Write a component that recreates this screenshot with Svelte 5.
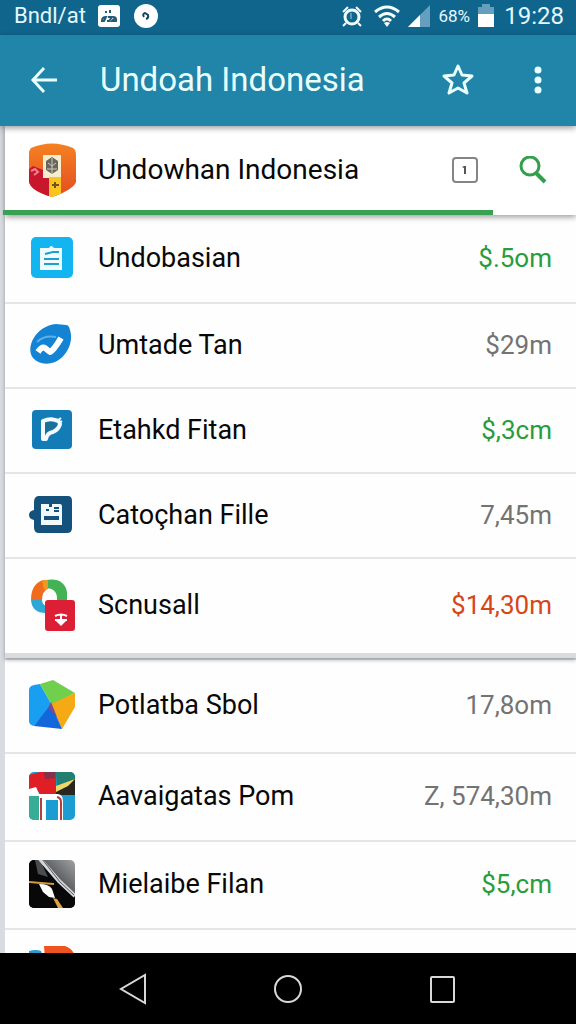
<script lang="ts">
  type Item = {
    name: string;
    amount: string;
    icon: string;
    tone?: 'up' | 'down';
    size?: 'tall' | 'short';
  };

  const recent: Item[] = [
    { name: 'Undobasian', amount: '$.5om', icon: 'clipboard', tone: 'up' },
    { name: 'Umtade Tan', amount: '$29m', icon: 'trend', size: 'short' },
    { name: 'Etahkd Fitan', amount: '$,3cm', icon: 'letter', tone: 'up', size: 'short' },
    { name: 'Catoçhan Fille', amount: '7,45m', icon: 'book', size: 'short' },
    { name: 'Scnusall', amount: '$14,30m', icon: 'ring', tone: 'down', size: 'tall' },
  ];

  const others: Item[] = [
    { name: 'Potlatba Sbol', amount: '17,8om', icon: 'gem', size: 'tall' },
    { name: 'Aavaigatas Pom', amount: 'Z, 574,30m', icon: 'mosaic' },
    { name: 'Mielaibe Filan', amount: '$5,cm', icon: 'photo', tone: 'up' },
    { name: '', amount: '', icon: 'tabs', size: 'short' },
  ];

  let query = $state('Undowhan Indonesia');
  let starred = $state(false);
</script>

{#snippet picture(icon: string)}
  <svg class="picture" viewBox="0 0 48 48" aria-hidden="true">
    {#if icon === 'clipboard'}
      <rect x="3" y="3" width="42" height="41" rx="5" fill="#12b5f0" />
      <path d="M12 14h9q2-4 5 0h8v22H12z" fill="#effbff" />
      <path d="M17 20l8-2h6M16 25h15M16 30h15" fill="none" stroke="#1f9fcb" stroke-width="2" />
    {:else if icon === 'trend'}
      <path d="M28 3l10 1q3 0 4 5c4 13-4 26-13 31-8 4-18 4-24-3C-3 26 8 5 28 3z" fill="#1483d4" />
      <path d="M9 21q7-7 19-5" fill="none" stroke="#56b3ec" stroke-width="2" />
      <path d="M10 31q4-6 7-4l5 4q4-2 11-14" fill="none" stroke="#fff" stroke-width="6" stroke-linejoin="round" />
    {:else if icon === 'letter'}
      <rect x="4" y="4" width="40" height="39" rx="4" fill="#137bb6" />
      <path d="M15 33V15q7-3 12-1 5 1 5 4-1 5-7 8-6 1-7 7z" fill="#1b6f9c" stroke="#f3fbff" stroke-width="4" stroke-linejoin="round" />
      <path d="M29 15l4-3M31 17l3-2" stroke="#f3fbff" stroke-width="2" />
    {:else if icon === 'book'}
      <path d="M10 5h30q4 0 4 5v27q0 5-5 5H11q-5 0-5-6v-7q-5-1-5-5t5-5v-8q0-5 4-6z" fill="#14527d" />
      <path d="M13 13h8v3h3v-3h8q2 0 2 3v18H13z" fill="#f1f8fc" />
      <path d="M18 19h3M26 17h5M26 20h5" stroke="#14527d" stroke-width="2" />
      <path d="M16 27h15" stroke="#14527d" stroke-width="4" />
    {:else if icon === 'ring'}
      <path d="M3 19Q3 3 15-1h5l1 8q-7 3-7 12z" fill="#f06b1b" />
      <path d="M18-1q18-3 21 12v9H29q1-12-10-13z" fill="#42b255" />
      <path d="M14-1l6 0 0 8-4 2z" fill="#ed9a24" />
      <path d="M3 19h11q0 4 4 6v7Q4 32 3 19z" fill="#2ea7d5" />
      <rect x="17" y="19" width="30" height="31" rx="3" fill="#dc1f34" />
      <path d="M27 35q6-3 12 0M33 33v10M27 39h12" fill="none" stroke="#fff" stroke-width="2" />
      <path d="M28 40h10l-5 5z" fill="#fff" />
    {:else if icon === 'gem'}
      <path d="M6 4l6-1 12 21L6 45q-5-1-5-5V9q0-4 5-5z" fill="#199ff2" />
      <path d="M12 3l13-4 22 13-23 12z" fill="#70cf4d" />
      <path d="M23 23l24-11v14L34 48z" fill="#f5a914" />
      <path d="M23 23l11 25-28-3z" fill="#1267db" />
      <path d="M23 21l6 15-9-9z" fill="#7a4b94" />
    {:else if icon === 'mosaic'}
      <clipPath id="mosaic-clip"><rect x="1" y="0" width="46" height="48" rx="5" /></clipPath>
      <g clip-path="url(#mosaic-clip)">
        <path d="M1 0h46v48H1z" fill="#1c9dd1" />
        <path d="M1 24h10v24H1z" fill="#37ad98" />
        <path d="M1 3L12 0h16v22H12l-4-6-7 2z" fill="#df1e25" />
        <path d="M1 17l7-2 4 9H1z" fill="#fff" />
        <path d="M16 0h11v6l-10 1z" fill="#84314f" />
        <path d="M28 0h19v10l-18 4z" fill="#217e70" />
        <path d="M28 15L47 7v16H28z" fill="#29251f" />
        <path d="M28 14l19-7-7 7-12 6z" fill="#f0d868" />
        <path d="M11 48V22h19q5 1 5 7v19h-5V28H18v20z" fill="#fff" />
        <path d="M13 48V26M33 48V30q0-4-4-5" fill="none" stroke="#b63e3d" stroke-width="2" />
      </g>
    {:else if icon === 'photo'}
      <linearGradient id="photo-shade" x1="1" x2="0" y2="1">
        <stop stop-color="#a2a4a6" />
        <stop offset="0.5" stop-color="#45484a" />
        <stop offset="0.6" stop-color="#090909" />
      </linearGradient>
      <clipPath id="photo-clip"><rect x="1" y="0" width="46" height="48" rx="5" /></clipPath>
      <g clip-path="url(#photo-clip)">
        <path d="M0 0h48v48H0z" fill="url(#photo-shade)" />
        <path d="M0 0h9l28 25 11 9v14H0z" fill="#080808" />
        <path d="M7 0l3 14 10 3L12 0z" fill="#4a4c4e" />
        <path d="M12-1l19 22 16 15" fill="none" stroke="#d5d8db" stroke-width="4" />
        <path d="M14-1l18 23 14 13" fill="none" stroke="#55595c" stroke-width="1" />
        <path d="M1 22l12 1 13 1" fill="none" stroke="#d49a39" stroke-width="2" />
        <path d="M11 24q10 0 13 5l3 9-6-1-6-5z" fill="#fff" />
        <path d="M25 38l4 1 6 9h-5z" fill="#dca43f" />
      </g>
    {:else}
      <path d="M1 3q7-2 12 0l3 7v38H1z" fill="#269bce" />
      <path d="M16-2h21q9 3 10 12v38H20z" fill="#f0541e" />
    {/if}
  </svg>
{/snippet}

{#snippet row(item: Item)}
  <li class="row {item.size ?? ''}">
    {@render picture(item.icon)}
    <span class="name">{item.name}</span>
    <span class="amount {item.tone ?? ''}">{item.amount}</span>
  </li>
{/snippet}

<div class="screen">
  <div class="status">
    <span class="carrier">Bndl/at</span>
    <svg width="22" height="22" viewBox="0 0 22 22" aria-hidden="true">
      <rect width="22" height="22" rx="3" fill="#fff" />
      <path d="M8 6v2M12 5v3M4 16q0-4 4-4l-2 4zM10 12h4l-3 4h-2M15 12q4 0 3 4h-4l3-3" fill="none" stroke="#245b75" stroke-width="2" />
    </svg>
    <svg class="disc" width="24" height="24" viewBox="0 0 24 24" aria-hidden="true">
      <circle cx="12" cy="12" r="12" fill="#fff" />
      <path d="M10 13q-2-3 1-4l3 2q1 3-2 4" fill="none" stroke="#17475f" stroke-width="2" />
    </svg>
    <svg class="push" width="20" height="22" viewBox="0 0 20 22" aria-hidden="true">
      <circle cx="10" cy="12" r="7" fill="none" stroke="#f3fdff" stroke-width="3" />
      <path d="M1 7l5-5M14 2l5 5M4 18l-3 3M16 18l3 3" fill="none" stroke="#f3fdff" stroke-width="2" />
      <path d="M9 8v6" stroke="#9fd0e2" stroke-width="1" />
    </svg>
    <svg class="wifi" width="26" height="22" viewBox="0 0 26 22" aria-hidden="true">
      <path d="M1 7q12-10 24 0M5 12q8-7 16 0M9 16q4-4 8 0" fill="none" stroke="#f3fdff" stroke-width="3" />
      <path d="M10 18q3-2 6 0l-3 4z" fill="#f3fdff" />
    </svg>
    <svg width="22" height="22" viewBox="0 0 22 22" aria-hidden="true">
      <path d="M22 0v22H0z" fill="#659fbd" />
      <path d="M12 10v12H0z" fill="#fff" />
    </svg>
    <span class="percent">68%</span>
    <svg width="16" height="23" viewBox="0 0 16 23" aria-hidden="true">
      <path d="M4 0h8v3h4v8H0V3h4z" fill="#659fbd" />
      <path d="M0 10h16v13H0z" fill="#fff" />
    </svg>
    <time>19:28</time>
  </div>

  <header class="bar">
    <button type="button" aria-label="Back">
      <svg width="28" height="28" viewBox="0 0 28 28">
        <path d="M14 2L3 14l11 12M3 14h24" fill="none" stroke="#eaffff" stroke-width="3" />
      </svg>
    </button>
    <h1>Undoah Indonesia</h1>
    <button type="button" aria-label="Favourite" aria-pressed={starred} onclick={() => (starred = !starred)}>
      <svg width="32" height="32" viewBox="0 0 32 32">
        <path d="M16 2l4 9 10 1-8 7 3 10-9-5-9 5 3-10-8-7 10-1z" fill={starred ? '#eaffff' : 'none'} stroke="#eaffff" stroke-width="3" stroke-linejoin="round" />
      </svg>
    </button>
    <button type="button" aria-label="More options">
      <svg width="28" height="28" viewBox="0 0 28 28" fill="#eaffff">
        <circle cx="14" cy="4" r="3.5" /><circle cx="14" cy="14" r="3.5" /><circle cx="14" cy="24" r="3.5" />
      </svg>
    </button>
  </header>

  <main>
    <form class="search" onsubmit={(e) => e.preventDefault()}>
      <div class="field">
        <svg class="crest" viewBox="0 0 48 54" aria-hidden="true">
          <linearGradient id="crest-fill" x2="0" y2="1">
            <stop stop-color="#f58220" /><stop offset="1" stop-color="#e34c22" />
          </linearGradient>
          <clipPath id="crest-clip">
            <path d="M3 5Q24-4 45 5q3 2 3 7v27q-3 8-24 15Q3 48 1 39V11q0-4 2-6z" />
          </clipPath>
          <g clip-path="url(#crest-clip)">
            <path d="M0 0h48v54H0z" fill="url(#crest-fill)" />
            <path d="M0 27l5-4 10 4v8h6v19H0z" fill="#c8172c" />
            <path d="M15 12h18v23H15z" fill="#f6edcf" />
            <path d="M21 34h12v20H21z" fill="#fac51e" />
            <path d="M18 18l6-4 6 4v9l-6 4-6-4z" fill="#696660" />
            <path d="M20 20l4 3 4-3M24 15v16M19 26h10" fill="none" stroke="#d0c9b7" />
            <path d="M24 42h7M27 39v6" stroke="#715321" stroke-width="2" />
            <path d="M3 28l4-2 3 3-4 3" fill="none" stroke="#ef8291" stroke-width="2" />
          </g>
        </svg>
        <input type="text" aria-label="Search" bind:value={query} />
        <button type="button" aria-label="Open tabs">
          <svg width="26" height="28" viewBox="0 0 26 28">
            <rect x="1" y="2" width="24" height="24" rx="3" fill="none" stroke="#858585" stroke-width="2" />
            <path d="M10 11l2-1h2v8h-2v-6z" fill="#555" />
          </svg>
        </button>
      </div>
      <button class="find" type="submit" aria-label="Find">
        <svg width="28" height="28" viewBox="0 0 28 28">
          <circle cx="11" cy="10" r="9" fill="none" stroke="#33a04d" stroke-width="3" />
          <path d="M17 17l9 9" stroke="#33a04d" stroke-width="4" />
        </svg>
      </button>
    </form>

    <ul class="recent">
      {#each recent as item}{@render row(item)}{/each}
    </ul>
    <ul>
      {#each others as item}{@render row(item)}{/each}
    </ul>
  </main>

  <nav>
    <button type="button" aria-label="Back">
      <svg width="30" height="32" viewBox="0 0 30 32"><path d="M27 2v28L3 16z" /></svg>
    </button>
    <button type="button" aria-label="Home">
      <svg width="30" height="32" viewBox="0 0 30 32"><circle cx="15" cy="16" r="13" /></svg>
    </button>
    <button type="button" aria-label="Recent apps">
      <svg width="30" height="32" viewBox="0 0 30 32"><rect x="3" y="4" width="23" height="25" rx="1" /></svg>
    </button>
  </nav>
</div>

<style>
  :global(body) {
    margin: 0;
    font-family: Roboto, 'Liberation Sans', sans-serif;
  }
  .screen {
    display: flex;
    flex-direction: column;
    height: 100vh;
    overflow: hidden;
    background: #d8dce1;
  }
  svg {
    display: block;
    flex: none;
  }
  button {
    display: flex;
    align-items: center;
    justify-content: center;
    padding: 0;
    border: none;
    background: none;
    cursor: pointer;
  }
  .status {
    display: flex;
    flex: none;
    align-items: center;
    height: 35px;
    padding: 0 12px 4px 14px;
    box-sizing: border-box;
    background: #10658d;
    color: #e4f8ff;
    font-size: 24px;
  }
  .carrier {
    width: 84px;
    font-size: 22px;
  }
  .disc {
    margin-left: 14px;
  }
  .push {
    margin-left: auto;
  }
  .wifi {
    margin: 0 8px 0 12px;
  }
  .percent {
    width: 48px;
    font-size: 17px;
    text-align: center;
  }
  time {
    margin-left: 10px;
  }
  .bar {
    display: flex;
    flex: none;
    align-items: center;
    height: 91px;
    padding: 0 16px 2px 30px;
    box-sizing: border-box;
    background: #2085a8;
    z-index: 3;
    box-shadow: 0 2px 6px rgba(0, 0, 0, 0.4);
  }
  .bar button:first-child {
    width: 28px;
  }
  .bar button {
    width: 44px;
    height: 48px;
  }
  .bar button:last-child {
    margin-left: 36px;
  }
  h1 {
    flex: 1;
    margin: 0 0 0 42px;
    color: #eaffff;
    font-size: 33px;
    font-weight: 400;
    white-space: nowrap;
  }
  main {
    flex: 1;
    min-height: 0;
    overflow: hidden;
    padding-left: 5px;
  }
  .search {
    position: relative;
    z-index: 2;
    display: flex;
    height: 89px;
    background: #fff;
    box-shadow: 0 2px 6px rgba(0, 0, 0, 0.4);
  }
  .field {
    display: flex;
    flex: 1;
    align-items: center;
    min-width: 0;
    margin-left: -2px;
    padding: 3px 15px 0 25px;
    border-bottom: 5px solid #38a152;
  }
  .crest {
    width: 48px;
    height: 54px;
  }
  input {
    flex: 1;
    min-width: 0;
    margin: 0;
    padding: 0 0 0 22px;
    border: none;
    outline: none;
    background: transparent;
    color: #080808;
    font: inherit;
    font-size: 28px;
  }
  .find {
    width: 83px;
    padding: 0 4px 2px 0;
  }
  ul {
    margin: 0;
    padding: 0;
    list-style: none;
    background: #fefefe;
  }
  /* thick grey edge that lifts the first card over the second */
  .recent {
    position: relative;
    z-index: 1;
    margin-bottom: 2px;
    border-bottom: 5px solid #dadbdc;
    box-shadow: 0 2px 4px rgba(0, 0, 0, 0.3);
  }
  .row {
    display: flex;
    align-items: center;
    height: 88px;
    padding: 0 24px 2px 23px;
    box-sizing: border-box;
    border-bottom: 2px solid #e3e5e7;
  }
  .recent .row:first-child {
    height: 89px;
  }
  .row.short {
    height: 85px;
  }
  .row.tall {
    height: 94px;
  }
  .row:last-child {
    border-bottom: none;
  }
  .picture {
    width: 48px;
    height: 48px;
    overflow: visible;
  }
  .name {
    flex: 1;
    margin-left: 22px;
    color: #080808;
    font-size: 27px;
    white-space: nowrap;
  }
  .amount {
    color: #737373;
    font-size: 26px;
    white-space: nowrap;
  }
  .up {
    color: #299c3b;
  }
  .down {
    color: #d5471a;
  }
  nav {
    display: flex;
    flex: none;
    align-items: center;
    justify-content: center;
    gap: 125px;
    height: 71px;
    background: #000;
  }
  nav svg {
    fill: none;
    stroke: #d8d8d8;
    stroke-width: 2;
  }
</style>
